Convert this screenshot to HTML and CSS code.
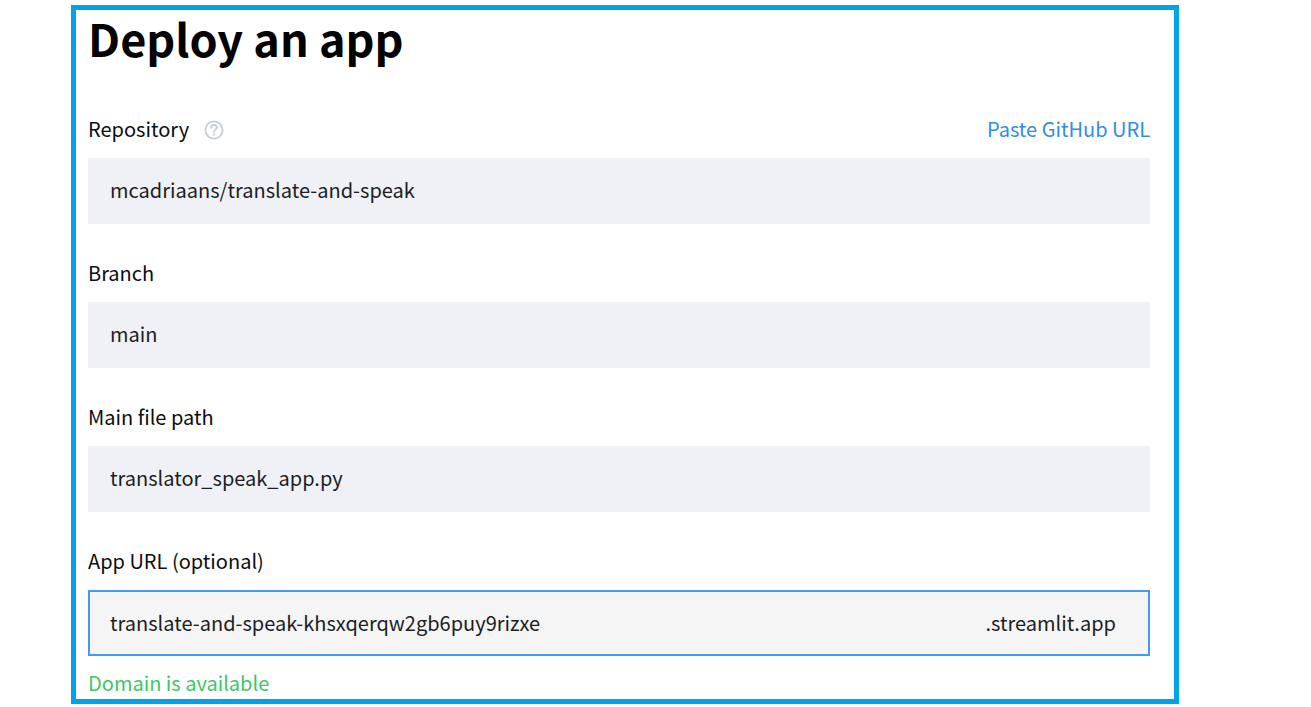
FILE: index.html
```html
<!DOCTYPE html>
<html lang="en">
<head>
<meta charset="utf-8">
<title>Deploy an app</title>
<link rel="stylesheet" href="styles.css">
</head>
<body>
<main class="panel">
  <h1 class="title">Deploy an app</h1>
  <form class="form">
    <div class="field">
      <div class="label-row">
        <label class="label" for="repo">Repository</label>
        <button class="help" type="button" aria-label="Help">
          <svg class="help-icon" viewBox="0 0 20 20" fill="none" stroke="currentColor" stroke-width="1.8" stroke-linecap="round">
            <circle cx="10" cy="10" r="8.6"/>
            <path d="M7.2 7.8c0-1.7 1.2-2.8 2.8-2.8s2.8 1.1 2.8 2.6c0 1.9-2.7 2.2-2.7 4.2"/>
            <circle cx="10" cy="14.5" r=".4"/>
          </svg>
        </button>
        <a class="link" href="#">Paste GitHub URL</a>
      </div>
      <input class="input" id="repo" type="text" value="mcadriaans/translate-and-speak">
    </div>
    <div class="field">
      <div class="label-row">
        <label class="label" for="branch">Branch</label>
      </div>
      <input class="input" id="branch" type="text" value="main">
    </div>
    <div class="field">
      <div class="label-row">
        <label class="label" for="path">Main file path</label>
      </div>
      <input class="input" id="path" type="text" value="translator_speak_app.py">
    </div>
    <div class="field">
      <div class="label-row">
        <label class="label" for="url">App URL (optional)</label>
      </div>
      <div class="url-box">
        <input class="url-input" id="url" type="text" value="translate-and-speak-khsxqerqw2gb6puy9rizxe">
        <span class="suffix">.streamlit.app</span>
      </div>
      <p class="status">Domain is available</p>
    </div>
  </form>
</main>
</body>
</html>
```
FILE: styles.css
```css
* {
  box-sizing: border-box;
}

body {
  margin: 0;
  background: #fff;
  color: #0c0d10;
  font: 20px/28px "Noto Sans CJK JP", "Noto Sans", sans-serif;
}

.panel {
  margin: 5px 132px 0 71px;
  padding: 0 24px 0 12px;
  border: 5px solid #00a2e8;
}

.title {
  margin: 0 0 49px;
  color: #000;
  font-size: 45px;
  font-weight: 700;
  line-height: 56px;
}

.form {
  display: flex;
  flex-direction: column;
  gap: 35px;
}

.field {
  display: flex;
  flex-direction: column;
}

.label-row {
  display: flex;
  align-items: center;
  margin-bottom: 15px;
}

.help {
  display: flex;
  margin-left: 15px;
  padding: 2px 0 0;
  border: 0;
  background: none;
  color: #c6cbdc;
}

.help-icon {
  width: 20px;
  height: 20px;
}

.link {
  margin-left: auto;
  color: #2f8de4;
  text-decoration: none;
}

.input,
.url-input {
  min-width: 0;
  border: 0;
  outline: 0;
  background: none;
  color: #1c1d25;
  font: inherit;
}

.input {
  height: 66px;
  padding: 0 22px 3px;
  background: #f0f1f6;
}

.url-box {
  display: flex;
  align-items: center;
  height: 66px;
  padding: 0 32px 1px 20px;
  border: 2px solid #409cf0;
  background: #f5f5f5;
  color: #1c1d25;
}

.url-input {
  flex: 1;
  padding: 0;
}

.status {
  margin: 13px 0 2px;
  color: #3dc766;
}
```
